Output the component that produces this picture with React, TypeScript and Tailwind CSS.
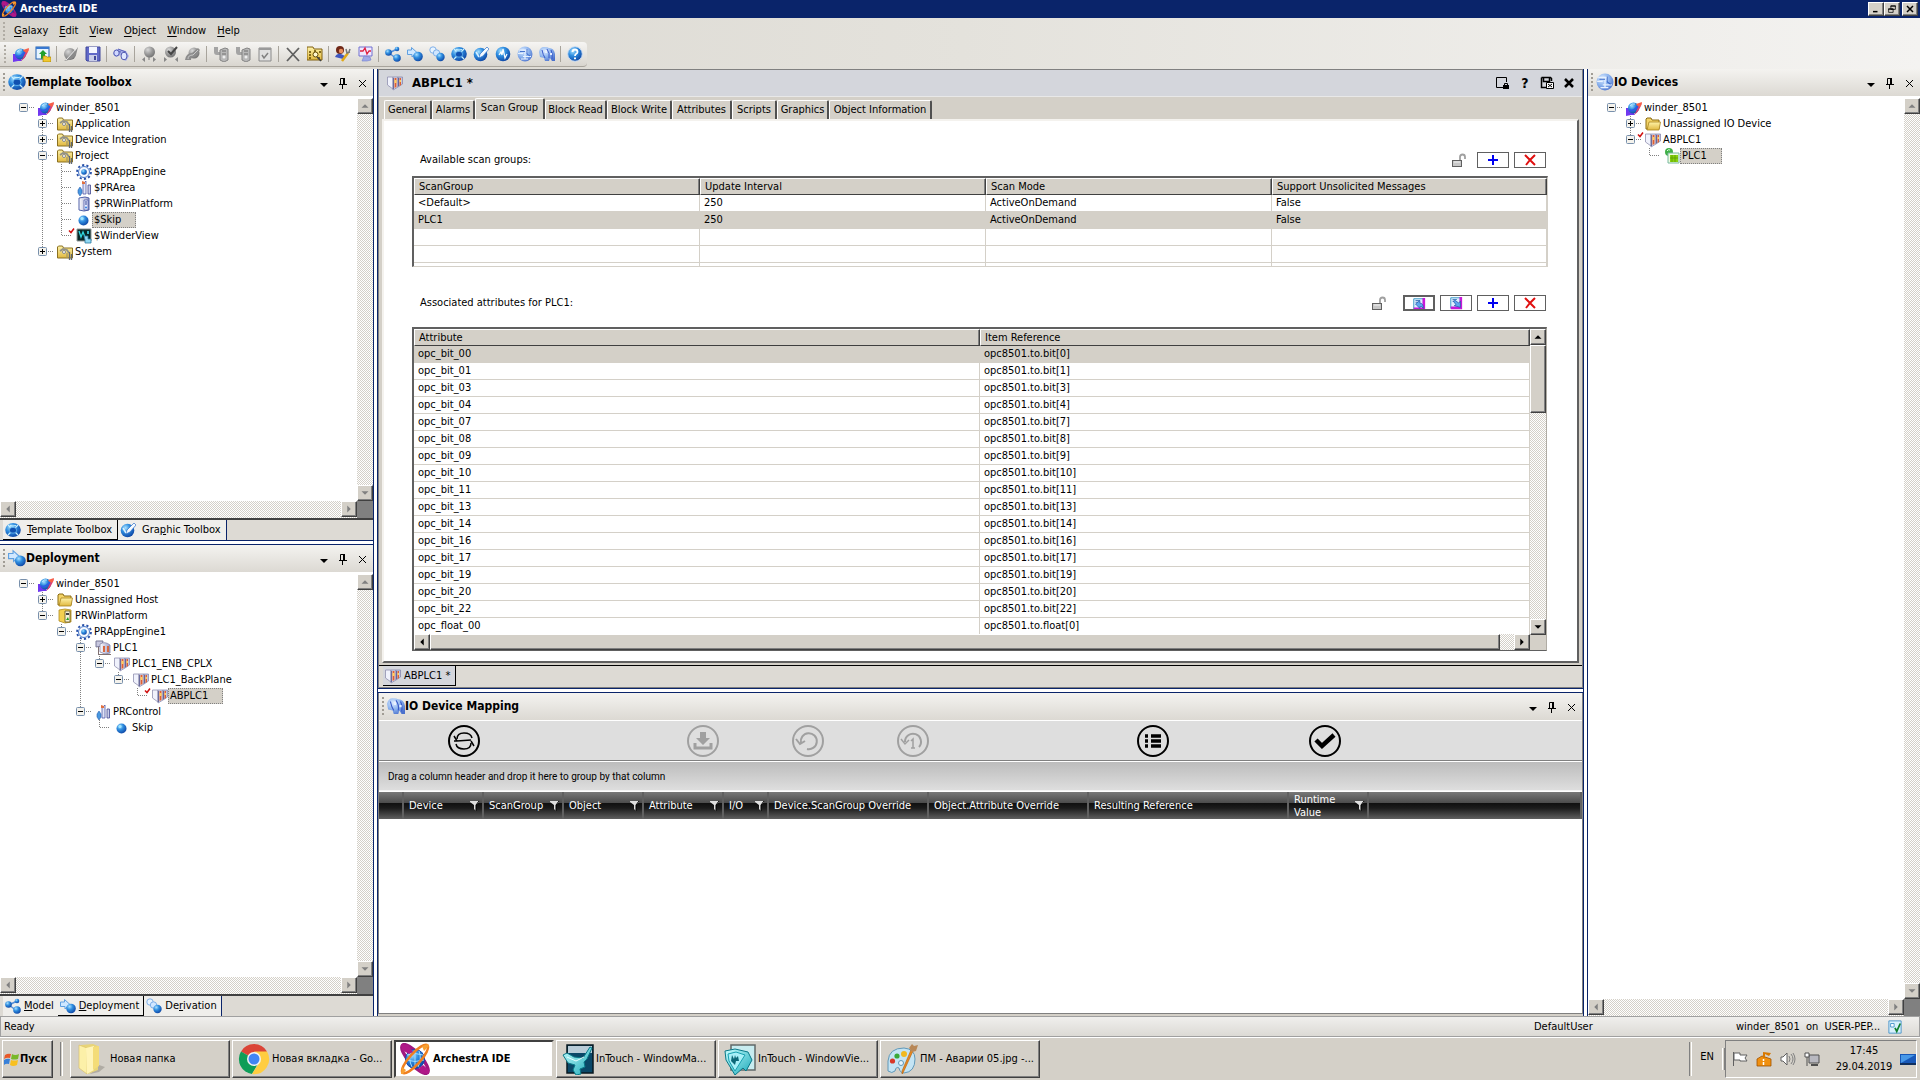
import React, { useState } from "react";
import clsx from "clsx";

const raised =
  "border border-t-white border-l-white border-r-[#404040] border-b-[#404040] bg-[#d4d0c8] shadow-[inset_-1px_-1px_0_#808080]";
const checker =
  "bg-[repeating-conic-gradient(#d4d0c8_0_25%,#ffffff_0_50%)] bg-[length:2px_2px]";

/* ---------- icons ---------- */

type IconProps = { className?: string };

function Svg({ className = "size-4", children, box = "0 0 16 16" }: any) {
  return (
    <svg viewBox={box} className={clsx("shrink-0", className)} aria-hidden="true">
      {children}
    </svg>
  );
}

// Shared gradients, referenced by id from every icon
function Defs() {
  return (
    <svg width="0" height="0" className="absolute" aria-hidden="true">
      <defs>
        <radialGradient id="blue" cx="0.35" cy="0.3" r="0.8">
          <stop offset="0" stopColor="#a8e0ff" />
          <stop offset="0.4" stopColor="#2f8ee0" />
          <stop offset="1" stopColor="#0a3c9c" />
        </radialGradient>
        <radialGradient id="grey" cx="0.35" cy="0.3" r="0.8">
          <stop offset="0" stopColor="#d8d8d8" />
          <stop offset="0.5" stopColor="#9a9a9a" />
          <stop offset="1" stopColor="#6c6c6c" />
        </radialGradient>
        <radialGradient id="pale" cx="0.35" cy="0.3" r="0.8">
          <stop offset="0" stopColor="#dcebff" />
          <stop offset="0.5" stopColor="#8db4ee" />
          <stop offset="1" stopColor="#4a70cc" />
        </radialGradient>
        <linearGradient id="folder" x1="0" y1="0" x2="0" y2="1">
          <stop offset="0" stopColor="#fff3a8" />
          <stop offset="1" stopColor="#e0b840" />
        </linearGradient>
        <linearGradient id="rack" x1="0" y1="0" x2="1" y2="0">
          <stop offset="0" stopColor="#ffffff" />
          <stop offset="1" stopColor="#9a9cc8" />
        </linearGradient>
        <linearGradient id="teal" x1="0" y1="0" x2="1" y2="1">
          <stop offset="0" stopColor="#c8ffff" />
          <stop offset="1" stopColor="#18a8b8" />
        </linearGradient>
      </defs>
    </svg>
  );
}

const Galaxy = (p: IconProps) => (
  <Svg {...p}>
    <path d="M0 8h5l4 7H5l-5 1z" fill="#7038f0" />
    <circle cx="7.500" cy="8" r="5.500" fill="url(#blue)" />
    <path d="M8 15Q13 12 16 3l-5 2 1 2q-2 5-4 8z" fill="#d84078" />
    <path d="M10 4l6-2-1 4-3 1z" fill="#f86048" />
    <path d="M3 10q4 2 9-4" stroke="#3058e8" strokeWidth="1.500" fill="none" />
    <path d="M4 6q2-3 5-2" stroke="#b8e8ff" fill="none" />
  </Svg>
);
const GalaxyGrey = (p: IconProps) => (
  <Svg {...p}>
    <circle cx="7" cy="8" r="6" fill="url(#grey)" />
    <path d="M1 15Q8 11 15 1l-2 8Q9 14 1 15z" fill="#8a8a8a" />
    <path d="M3 14L14 2" stroke="#e8e8e8" />
  </Svg>
);
const ImportWin = (p: IconProps) => (
  <Svg {...p}>
    <rect x="1" y="1" width="13" height="12" fill="#e8f4ff" stroke="#2060b0" />
    <path d="M1 1h13v2H1z" fill="#3878d0" />
    <path d="M6 13V8H4l4-4 4 4h-2v4z" fill="#20a030" />
    <path d="M8 10h3l1 1h4v5H8z" fill="#f0c830" stroke="#a07800" strokeWidth=".6" />
  </Svg>
);
const Save = (p: IconProps) => (
  <Svg {...p}>
    <path d="M1 1h14v14H2l-1-1z" fill="#6068c8" stroke="#40489c" />
    <rect x="4" y="1" width="8" height="6" fill="#f4f6ff" />
    <rect x="4" y="9" width="8" height="6" fill="#c8cce8" />
    <rect x="9" y="10" width="2" height="4" fill="#404898" />
  </Svg>
);
const Binoculars = (p: IconProps) => (
  <Svg {...p}>
    <path d="M2 4l3-1 8 2 3 5-3 5-4-2-1-4-5 2-3-3z" fill="#a8b0e8" />
    <path d="M5 3l8 3M2 5l6 1" stroke="#5860b8" />
    <ellipse cx="3.500" cy="7" rx="2.700" ry="3" fill="#d0d8ff" stroke="#5058b0" />
    <ellipse cx="11" cy="10" rx="3" ry="3.800" fill="#e0e8ff" stroke="#5058b0" />
  </Svg>
);
const GreyCheckOut = (p: IconProps) => (
  <Svg {...p}>
    <circle cx="8.500" cy="6" r="5.500" fill="url(#grey)" />
    <path d="M1 13.500l3-2.500v5zM15 13.500L12 11v5z" fill="#888" />
    <path d="M8 11v3" stroke="#777" />
  </Svg>
);
const GreyCheckIn = (p: IconProps) => (
  <Svg {...p}>
    <circle cx="7.500" cy="6" r="5.500" fill="url(#grey)" />
    <path d="M5 5l3 3 6-7" stroke="#444" strokeWidth="2" fill="none" />
    <path d="M4 13.500L1 11v5zM12 13.500l3-2.500v5z" fill="#888" />
  </Svg>
);
const GreyUndo = (p: IconProps) => (
  <Svg {...p}>
    <circle cx="9" cy="7" r="5.500" fill="url(#grey)" />
    <path d="M0 14q1-7 7-7l6-5 2 2-6 7q-3 0-3 3z" fill="#8c8c8c" />
    <path d="M3 13q0-4 5-4l5-5" stroke="#c8c8c8" fill="none" />
  </Svg>
);
const GreyDeploy = (p: IconProps) => (
  <Svg {...p}>
    <path d="M1 1h4v5h5v3H4Q1 9 1 6z" fill="#a4a4a4" />
    <path d="M7 4l5-2 3 1v11l-4 2-4-2z" fill="#b8b8b8" stroke="#848484" />
    <path d="M9 5h4M9 8h4" stroke="#707070" />
    <circle cx="11" cy="11" r="1.500" fill="#eee" />
  </Svg>
);
const GreyList = (p: IconProps) => (
  <Svg {...p}>
    <path d="M2 2h12v13H2z" fill="#e0e0e0" stroke="#8a8a8a" />
    <path d="M2 2h12v2H2z" fill="#9a9a9a" />
    <path d="M5 9l2 3 4-5" stroke="#808080" strokeWidth="1.500" fill="none" />
  </Svg>
);
const DeleteX = (p: IconProps) => (
  <Svg {...p}>
    <path d="M2 2l12 13M14 2L2 15" stroke="#606060" strokeWidth="1.800" />
  </Svg>
);
const FolderSearch = (p: IconProps) => (
  <Svg {...p}>
    <path d="M0 1h6l1 2h8v11H0z" fill="url(#folder)" stroke="#806010" />
    <path d="M2 6h2M2 9h2M2 12h2M7 5h2M12 6h2M11 12h2" stroke="#604800" strokeWidth="1.500" />
    <circle cx="8.500" cy="8.500" r="2.500" fill="#fff8d0" stroke="#604800" />
    <path d="M10 11l4 4" stroke="#404040" strokeWidth="1.500" />
  </Svg>
);
const UserWrench = (p: IconProps) => (
  <Svg {...p}>
    <circle cx="5" cy="4" r="4" fill="#702818" />
    <circle cx="6" cy="5" r="2.200" fill="#e89060" />
    <path d="M0 11q2-4 6-3l4 2-2 3z" fill="#4058c0" />
    <path d="M7 15l6-8" stroke="#e0a818" strokeWidth="2.500" />
    <path d="M11 3l1 4 3-1M15 3l-1 3" stroke="#787878" strokeWidth="1.500" fill="none" />
  </Svg>
);
const ChartDoc = (p: IconProps) => (
  <Svg {...p}>
    <path d="M2 1h13v9H2z" fill="#f0e8ff" stroke="#7070d0" />
    <path d="M3 5h3l2-3 2 6 2-3h2" stroke="#e02040" strokeWidth="1.300" fill="none" />
    <path d="M5 15l2-5 6 1 1 3-4 1z" fill="#a0a8e8" stroke="#7080d0" strokeWidth=".6" />
  </Svg>
);
const Model = (p: IconProps) => (
  <Svg {...p}>
    <path d="M12 3L4 7l8 6" stroke="#5890d8" strokeWidth="1.500" fill="none" />
    <circle cx="12" cy="3" r="2.300" fill="url(#blue)" />
    <circle cx="3.500" cy="6.500" r="3.300" fill="url(#blue)" />
    <circle cx="12" cy="12" r="3.800" fill="url(#blue)" />
  </Svg>
);
const DeployIcon = (p: IconProps) => (
  <Svg {...p}>
    <path d="M.5 4h4V1.500L10 6.500 5 11V8.500H.5z" fill="#d0e8ff" stroke="#60a0e0" />
    <circle cx="11" cy="10.500" r="4.800" fill="url(#blue)" />
  </Svg>
);
const Derivation = (p: IconProps) => (
  <Svg {...p}>
    <circle cx="4" cy="4" r="3.200" fill="#e8f4ff" stroke="#80b0e8" />
    <circle cx="7.500" cy="7" r="3.200" fill="#d0e6ff" stroke="#80b0e8" />
    <circle cx="11.500" cy="11" r="4.200" fill="url(#blue)" />
  </Svg>
);
const ToolboxIcon = (p: IconProps) => (
  <Svg {...p}>
    <ellipse cx="8" cy="8" rx="7.800" ry="7" fill="url(#blue)" />
    <path d="M3 3l3 3M13 3l-3 3M3 13l3-3M13 13l-3-3" stroke="#c8f0ff" strokeWidth="1.200" />
    <path d="M5 3.500q3 1 6 0" stroke="#c8f0ff" fill="none" />
    <rect x="4.500" y="5.500" width="7" height="5.500" rx="2.500" fill="#1050b0" stroke="#68b8f0" strokeWidth=".8" />
  </Svg>
);
const GraphicIcon = (p: IconProps) => (
  <Svg {...p}>
    <circle cx="7.500" cy="8.500" r="6.800" fill="url(#blue)" />
    <path d="M6 12l1-4 7-7 2 2-6 7z" fill="#f4faff" stroke="#3070c8" strokeWidth=".7" />
    <path d="M3 6l3 5" stroke="#d8f0ff" strokeWidth="1.500" />
  </Svg>
);
const Operations = (p: IconProps) => (
  <Svg {...p}>
    <circle cx="8" cy="8" r="7.300" fill="url(#blue)" />
    <path d="M4 9l2-3 1 3 1-6 2 9 2-4" stroke="#fff" strokeWidth="1.200" fill="none" />
  </Svg>
);
const IoDevices = (p: IconProps) => (
  <Svg {...p}>
    <circle cx="8" cy="8" r="7.500" fill="url(#pale)" />
    <path d="M2 4h8v3M1 7.500h5M6 10.500h8M4 13h7M8 4v9" stroke="#e8f2ff" strokeWidth="1.200" fill="none" />
    <path d="M3 5.500h5M10 3v5l3 2" stroke="#3868c8" strokeWidth=".9" fill="none" />
  </Svg>
);
const IoMapping = (p: IconProps) => (
  <Svg {...p}>
    <path d="M0 6q1-5 5-5t5 1q5 0 6 6v7h-3l-2-3-1 3H6l-1-3-4-1z" fill="url(#pale)" />
    <path d="M3 4q1 5 3 8M8 3q3 4 2 9M12 4q2 4 1 9" stroke="#3858c8" fill="none" />
    <path d="M6 4h2v3H6zM11 7h2v2h-2z" fill="#e8f0ff" />
  </Svg>
);
const HelpIcon = (p: IconProps) => (
  <Svg {...p}>
    <circle cx="8" cy="8" r="7.300" fill="url(#blue)" stroke="#c8dcf4" />
    <path d="M5.500 6q0-2.500 2.500-2.500T10.500 6q0 1.200-1.500 2-1 .6-1 2" stroke="#fff" strokeWidth="1.800" fill="none" />
    <path d="M7 11.500h2v1.700H7z" fill="#fff" />
  </Svg>
);
const ToolFolder = (p: IconProps) => (
  <Svg {...p}>
    <path d="M.5 14V3l1-1h4l1 2h9v10z" fill="url(#folder)" stroke="#8a7020" />
    <path d="M3 7l3-2 4 1 2 3" stroke="#909088" strokeWidth="1.800" fill="none" />
    <circle cx="7" cy="8" r="1.500" fill="#fff" stroke="#888" />
    <path d="M10 9v5" stroke="#a89860" strokeWidth="1.300" />
    <path d="M12.500 8v8M14.500 10v6" stroke="#606870" strokeWidth="1.300" />
  </Svg>
);
const Folder = (p: IconProps) => (
  <Svg {...p}>
    <path d="M1 13V3l1-1h4l1 2h7v9z" fill="#f4d468" stroke="#8a6a10" />
    <path d="M2 14l2-8h11.500L14 14z" fill="url(#folder)" stroke="#a88420" strokeWidth=".8" />
  </Svg>
);
const Gear = (p: IconProps) => (
  <Svg {...p}>
    <circle cx="8" cy="8" r="7" fill="none" stroke="#2850a8" strokeWidth="1.800" strokeDasharray="2.200 2.200" />
    <circle cx="8" cy="8" r="5.500" fill="#f4f8ff" stroke="#4878c8" />
    <circle cx="8" cy="8" r="2.800" fill="url(#blue)" />
  </Svg>
);
const AreaIcon = (p: IconProps) => (
  <Svg {...p}>
    <path d="M7 4l3-3v13H7z" fill="#e0e4f4" stroke="#5058a8" strokeWidth=".8" />
    <path d="M12 5h2.500v9H12z" fill="#c8cce8" stroke="#404890" strokeWidth=".8" />
    <path d="M6 1l3 1v2H6z" fill="#e07040" />
    <path d="M4 7l2 3v3l-2 3-2-3v-3z" fill="#4898e0" stroke="#2860b0" strokeWidth=".6" />
  </Svg>
);
const Platform = (p: IconProps) => (
  <Svg {...p}>
    <path d="M3 2l6-1 4 1v12l-5 1-5-1z" fill="url(#rack)" stroke="#5060a8" />
    <path d="M8 4h4v10H8z" fill="#e8ecff" stroke="#4050a0" strokeWidth=".7" />
    <path d="M9 6h2M9 8h2" stroke="#304090" />
    <circle cx="10" cy="11.500" r="1" fill="#3080e0" />
  </Svg>
);
const PlatformYellow = (p: IconProps) => (
  <Svg {...p}>
    <path d="M2 2l6-1 6 1v12l-6 1-6-2z" fill="#f4d050" stroke="#b08c20" strokeWidth=".8" />
    <path d="M8 3h5v11H8z" fill="#f8f4d8" stroke="#605020" strokeWidth=".8" />
    <path d="M9 5h3v2H9z" fill="#404040" />
    <path d="M9 12l2-3 1 3z" fill="#20a020" />
  </Svg>
);
const Ball = (p: IconProps) => (
  <Svg {...p}>
    <circle cx="7.500" cy="8.500" r="5" fill="url(#blue)" />
    <circle cx="6" cy="6.500" r="1.500" fill="#a0e8ff" />
  </Svg>
);
const ViewIcon = (p: IconProps) => (
  <Svg {...p}>
    <path d="M1 1h14v12H1z" fill="#082828" stroke="#909898" />
    <path d="M3 3l2 6 2-5 2 5" stroke="#30d8e0" fill="none" strokeWidth="1.300" />
    <path d="M8 8h4v3h3v4H9v-3z" fill="#90d8f4" stroke="#2878a0" strokeWidth=".8" />
    <path d="M11 3h2v3h-2z" fill="#38b8c8" />
  </Svg>
);
const Rack = (p: IconProps) => (
  <Svg {...p}>
    <path d="M.5 2H6v12L.5 10z" fill="#f0f2fc" stroke="#9090b0" strokeWidth=".8" />
    <path d="M6 2h5v10l-5 3z" fill="#dcdef0" stroke="#8080a8" strokeWidth=".7" />
    <path d="M11 2h4.500v7L11 12z" fill="#c4c6e0" stroke="#8080a8" strokeWidth=".7" />
    <path d="M7.500 3h2v9l-2 1zM12.500 3h1.500v7l-1.500 1z" fill="#e06030" />
    <path d="M7.500 5h2v3h-2zM12.500 5h1.500v2h-1.500z" fill="#ffd060" />
    <path d="M6.500 3v11M11.500 3v8" stroke="#484880" strokeWidth=".7" />
  </Svg>
);
const RackNet = (p: IconProps) => (
  <Svg {...p}>
    <path d="M1 1h7l-1 5-6 1z" fill="#c8c8e0" stroke="#787898" />
    <path d="M5 4q5-3 10 1v8l-5 1-5-2z" fill="url(#rack)" stroke="#8484a8" strokeWidth=".8" />
    <path d="M8 6h2v6H8zM12 6h2v6h-2z" fill="#d86840" />
    <path d="M3 14.500h13M3.500 7v7" stroke="#807070" />
  </Svg>
);
const PlcGreen = (p: IconProps) => (
  <Svg {...p}>
    <circle cx="5" cy="4" r="4" fill="#40b048" />
    <path d="M3 3q1-2 3-1" stroke="#d8ffd8" fill="none" />
    <path d="M4 5h11v10H4z" fill="#f0fce0" stroke="#78b8a0" />
    <path d="M6 7h8v7H6z" fill="#88d010" />
    <path d="M8 7v7M11 7v7M6 10h8" stroke="#58a000" strokeWidth=".8" />
  </Svg>
);
const Unlock = (p: IconProps) => (
  <Svg {...p}>
    <path d="M9 8V5q0-2.500 2.500-2.500T14 5v2" stroke="#a0a0a0" strokeWidth="1.800" fill="none" />
    <rect x="1.500" y="8.500" width="9" height="6" fill="#c8c8c8" stroke="#606060" />
    <path d="M3 10h6" stroke="#f4f4f4" />
  </Svg>
);
const AttrAdd = ({ flip, className = "size-[14px]" }: any) => (
  <Svg className={className}>
    <path d="M2 2h11v12H2z" fill="#e0f0ff" stroke="#2890c0" />
    <path d="M12 1h3v14H2v-3h10z" fill="#c818d8" />
    <path d="M4 4h5M4 6h4" stroke="#3870b8" />
    <path
      d={flip ? "M13 13L6 11l2-1-3-4 2-1 4 3 2-2z" : "M4 8l5-4v3q4 0 4 6-2-3-4-2v2z"}
      fill="#60a8f0"
      stroke="#2050a8"
      strokeWidth=".8"
    />
  </Svg>
);

const XLogo = ({ className = "size-8" }: IconProps) => (
  <Svg className={className} box="0 0 32 32">
    <ellipse cx="16" cy="16" rx="18.500" ry="6" fill="none" stroke="#a01880" strokeWidth="3.500" transform="rotate(48 16 16)" />
    <circle cx="16" cy="16" r="9.500" fill="url(#blue)" stroke="#1848b0" />
    <path d="M8 12q8-3 16 0M7 17q9 3 18 0M12 8q-3 8 1 16M20 8q3 8-1 16M16 7v18" stroke="#a0dcff" fill="none" />
    <ellipse cx="16" cy="16" rx="18.500" ry="5.500" fill="none" stroke="#f08020" strokeWidth="2.500" transform="rotate(-48 16 16)" />
    <path d="M2 1l7 1 5 7-4 2L3 7zM30 31l-8-1-2-5 4-3 6 5z" fill="#b01888" />
    <path d="M23 3l6-2 1 2-5 5zM3 24l4 3-3 4H2z" fill="#f8a030" />
  </Svg>
);
const BigFolder = () => (
  <Svg className="size-8" box="0 0 32 32">
    <path d="M14 31l9-2 6-5-6-2z" fill="#b0aca4" />
    <path d="M5 2l12-1 5 2v24l-10 4z" fill="#e8d478" />
    <path d="M3 2l8 3v26l-8-6z" fill="#fcf0a8" stroke="#d8bc60" strokeWidth=".6" />
    <path d="M10 5l8-2v24l-7 4z" fill="#fff4b8" />
    <path d="M17 4l6-1v20l-6 4z" fill="#f4dc78" />
  </Svg>
);
const Chrome = () => (
  <Svg className="size-8" box="0 0 32 32">
    <path d="M16 16L3 8.500A15 15 0 0 1 29 8.500z" fill="#db4437" />
    <path d="M16 16L3 8.500A15 15 0 0 0 14 31l7-12z" fill="#0f9d58" />
    <path d="M14 31A15 15 0 0 0 29 8.500H16l6 10z" fill="#ffcd40" />
    <circle cx="16" cy="16" r="7" fill="#f4f4f4" />
    <circle cx="16" cy="16" r="5.500" fill="#4285f4" />
  </Svg>
);
const WindowMaker = () => (
  <Svg className="size-8" box="0 0 32 32">
    <path d="M5 2h26v28H5z" fill="#0a4868" stroke="#081820" strokeWidth="1.500" />
    <path d="M6 3h24v7H6z" fill="#b8ccd8" />
    <path d="M1 12l4-2 7 4 9 1 7-11 2 1-5 11 -3 3 1 5-5 2 1 5-5 1-3-5 2-5-7-2z" fill="url(#teal)" stroke="#087888" />
    <path d="M5 14l9 4 8-4" stroke="#e8ffff" fill="none" />
  </Svg>
);
const WindowViewer = () => (
  <Svg className="size-8" box="0 0 32 32">
    <path d="M7 2h24v25H7z" fill="#c8ecf0" stroke="#606868" strokeWidth="1.500" />
    <path d="M1 8l10-2 13 3 4 8-6 11-3-3-8 7L2 17z" fill="url(#teal)" stroke="#087888" />
    <path d="M4 11l8-2 9 3-10 16-6-10z" fill="#a8f0f8" stroke="#18a0b0" />
    <path d="M8 12l-1 6 4 4 1-4 3 0-1-5-2 2-1-3-1 4z" fill="#0c6878" />
  </Svg>
);
const Palette = () => (
  <Svg className="size-8" box="0 0 32 32">
    <path d="M2 18Q3 5 18 5q11 1 11 11 0 13-11 14-4 0-5-5-3-2-4 3-3 3-7 0z" fill="#c4e4f4" stroke="#6098b8" />
    <circle cx="6.500" cy="18" r="2.600" fill="#d83828" />
    <circle cx="11" cy="13" r="2.600" fill="#38a838" />
    <circle cx="18" cy="11" r="3" fill="#f0b820" />
    <circle cx="15" cy="20" r="2.500" fill="#e8f4fc" stroke="#6098b8" />
    <path d="M27 8L17 30l-1 1v-3L25 7z" fill="#e88820" stroke="#b06010" strokeWidth=".6" />
    <path d="M23 5l3-4 2 2 4-1-2 6-4 1z" fill="#b88858" />
  </Svg>
);

/* ---------- tree ---------- */

type Row = {
  label: string;
  icon: (p: IconProps) => React.ReactElement;
  // one entry per indent level, true where an ancestor line runs through
  guides: boolean[];
  box?: "+" | "-";
  up?: boolean;
  down?: boolean;
  checked?: boolean;
  selected?: boolean;
};

function Tree({ label, rows }: { label: string; rows: Row[] }) {
  const [sel, setSel] = useState(rows.findIndex((r) => r.selected));
  return (
    <ul role="tree" aria-label={label} className="pl-[14px] pt-1">
      {rows.map((r, i) => (
        <li
          key={r.label}
          role="treeitem"
          aria-selected={sel === i}
          onClick={() => setSel(i)}
          className="flex h-4 items-center"
        >
          {r.guides.map((g, k) => (
            <svg key={k} className="h-4 w-[19px] shrink-0" aria-hidden="true">
              {g && <path d="M9.500 0v16" stroke="#808080" strokeDasharray="1 1" />}
            </svg>
          ))}
          <svg className="h-4 w-6 shrink-0" aria-hidden="true">
            <g stroke="#808080" strokeDasharray="1 1">
              {r.up && <path d="M9.500 0v8" />}
              {r.down && <path d="M9.500 8v8" />}
              <path d={r.box ? "M15 7.500h5" : "M10 7.500h10"} />
            </g>
            {r.box && (
              <>
                <rect x="5.500" y="3.500" width="8" height="8" rx="1" fill="#f4f2ec" stroke="#7890ac" />
                <path d={r.box === "+" ? "M7 7.500h5M9.500 5v5" : "M7 7.500h5"} stroke="#000" />
              </>
            )}
            {r.checked && <path d="M17 2.500l2 2 3-4" stroke="#d01010" strokeWidth="1.500" fill="none" />}
          </svg>
          <r.icon className="size-4" />
          <span
            className={clsx(
              "h-4 whitespace-nowrap border pl-px leading-[14px]",
              sel === i
                ? "border-dotted border-[#808080] bg-[#d4d0c8] pr-[14px]"
                : "border-transparent"
            )}
          >
            {r.label}
          </span>
        </li>
      ))}
    </ul>
  );
}

const templateRows: Row[] = [
  { label: "winder_8501", icon: Galaxy, guides: [], box: "-" },
  { label: "Application", icon: ToolFolder, guides: [false], box: "+", up: true, down: true },
  { label: "Device Integration", icon: ToolFolder, guides: [false], box: "+", up: true, down: true },
  { label: "Project", icon: ToolFolder, guides: [false], box: "-", up: true, down: true },
  { label: "$PRAppEngine", icon: Gear, guides: [false, true], up: true, down: true },
  { label: "$PRArea", icon: AreaIcon, guides: [false, true], up: true, down: true },
  { label: "$PRWinPlatform", icon: Platform, guides: [false, true], up: true, down: true },
  { label: "$Skip", icon: Ball, guides: [false, true], up: true, down: true, selected: true },
  { label: "$WinderView", icon: ViewIcon, guides: [false, true], up: true, checked: true },
  { label: "System", icon: ToolFolder, guides: [false], box: "+", up: true },
];

const deployRows: Row[] = [
  { label: "winder_8501", icon: Galaxy, guides: [], box: "-" },
  { label: "Unassigned Host", icon: Folder, guides: [false], box: "+", up: true, down: true },
  { label: "PRWinPlatform", icon: PlatformYellow, guides: [false], box: "-", up: true },
  { label: "PRAppEngine1", icon: Gear, guides: [false, false], box: "-", up: true },
  { label: "PLC1", icon: RackNet, guides: [false, false, false], box: "-", up: true, down: true },
  { label: "PLC1_ENB_CPLX", icon: Rack, guides: [false, false, false, true], box: "-", up: true },
  { label: "PLC1_BackPlane", icon: Rack, guides: [false, false, false, true, false], box: "-", up: true },
  { label: "ABPLC1", icon: Rack, guides: [false, false, false, true, false, false], up: true, checked: true, selected: true },
  { label: "PRControl", icon: AreaIcon, guides: [false, false, false], box: "-", up: true },
  { label: "Skip", icon: Ball, guides: [false, false, false, false], up: true },
];

const deviceRows: Row[] = [
  { label: "winder_8501", icon: Galaxy, guides: [], box: "-" },
  { label: "Unassigned IO Device", icon: Folder, guides: [false], box: "+", up: true, down: true },
  { label: "ABPLC1", icon: Rack, guides: [false], box: "-", up: true, checked: true },
  { label: "PLC1", icon: PlcGreen, guides: [false, false], up: true, selected: true },
];

/* ---------- shared chrome ---------- */

const arrows: Record<string, string> = {
  up: "M4 10h8L8 6z",
  down: "M4 6h8L8 10z",
  left: "M10 4v8L6 8z",
  right: "M6 4v8l4-4z",
};

function ArrowButton({ dir, dark }: { dir: string; dark?: boolean }) {
  return (
    <button
      type="button"
      aria-label={`Scroll ${dir}`}
      className={clsx(raised, "grid size-4 shrink-0 place-items-center")}
    >
      <svg viewBox="0 0 16 16" className="size-[14px]" aria-hidden="true">
        <path d={arrows[dir]} fill={dark ? "#000" : "#808080"} />
      </svg>
    </button>
  );
}

function ScrollArea({ children }: { children: React.ReactNode }) {
  return (
    <div className="flex min-h-0 flex-1 flex-col bg-white">
      <div className="flex min-h-0 flex-1">
        <div className="min-w-0 flex-1 overflow-hidden">{children}</div>
        <div className={clsx(checker, "mt-[2px] flex w-4 flex-col justify-between")}>
          <ArrowButton dir="up" />
          <ArrowButton dir="down" />
        </div>
      </div>
      <div className="flex h-[17px] bg-[#808080]">
        <div className={clsx(checker, "flex flex-1 justify-between")}>
          <ArrowButton dir="left" />
          <ArrowButton dir="right" />
        </div>
        <div className="w-4" />
      </div>
    </div>
  );
}

function PanelHeader({ title, icon: Icon }: any) {
  return (
    <header className="flex h-[27px] shrink-0 items-center bg-gradient-to-b from-[#f4f3f0] to-[#dcd9d3] pb-[2px] pl-[3px] pr-[3px]">
      <span className="h-[18px] w-[3px] border-l-2 border-dotted border-[#a09c94]" />
      <Icon className="ml-[2px] size-[18px]" />
      <h2 className="flex-1 text-[12px] font-bold">{title}</h2>
      <div className="flex gap-[3px] pt-[3px]">
        <button type="button" aria-label="Window position" className="grid size-4 place-items-center">
          <svg viewBox="0 0 16 16" className="size-4" aria-hidden="true">
            <path d="M4 8h8l-4 4z" />
          </svg>
        </button>
        <button type="button" aria-label="Auto hide" className="grid size-4 place-items-center">
          <svg viewBox="0 0 16 16" className="size-4" fill="none" stroke="#000" aria-hidden="true">
            <path d="M5.500 9V3.500h4V9M9.500 3v6M4 9.500h8M8.500 3v6M7.500 10v4" />
          </svg>
        </button>
        <button type="button" aria-label="Close" className="grid size-4 place-items-center">
          <svg viewBox="0 0 16 16" className="size-4" stroke="#000" aria-hidden="true">
            <path d="M5 5l7 7M12 5l-7 7" />
          </svg>
        </button>
      </div>
    </header>
  );
}

type DockTab = { label: React.ReactNode; icon: any; active?: boolean };

function DockTabs({ tabs, wide }: { tabs: DockTab[]; wide?: boolean }) {
  return (
    <div className="flex h-[22px] shrink-0 border-t-2 border-[#404040] bg-[#dddad4] pl-[3px]">
      {tabs.map((t, i) => (
        <button
          key={i}
          type="button"
          className={clsx(
            "flex items-center whitespace-nowrap bg-[#efeeeb] pl-[2px]",
            wide ? "gap-[6px] pr-[5px]" : "gap-[3px] pr-1",
            t.active && "border-b border-r border-black bg-[#e6e4e0]",
            i === tabs.length - 1 && "border-r border-[#0a246a]"
          )}
        >
          <t.icon className="size-4" />
          <span>{t.label}</span>
        </button>
      ))}
    </div>
  );
}

/* ---------- toolbar ---------- */

const toolbar: [string, any][][] = [
  [["Change galaxy", Galaxy], ["Import", ImportWin]],
  [["Open", GalaxyGrey], ["Save", Save]],
  [["Find", Binoculars]],
  [["Check out", GreyCheckOut], ["Check in", GreyCheckIn], ["Undo check out", GreyUndo]],
  [["Deploy", GreyDeploy], ["Undeploy", GreyDeploy], ["Validate", GreyList]],
  [["Delete", DeleteX], ["Properties", FolderSearch]],
  [["User settings", UserWrench], ["Galaxy status", ChartDoc]],
  [
    ["Model view", Model],
    ["Deployment view", DeployIcon],
    ["Derivation view", Derivation],
    ["Template toolbox", ToolboxIcon],
    ["Graphic toolbox", GraphicIcon],
    ["Operations", Operations],
    ["IO devices", IoDevices],
    ["IO device mapping", IoMapping],
  ],
  [["Help", HelpIcon]],
];

function Grip() {
  return <span className="ml-[3px] mr-1 h-[18px] border-l-2 border-dotted border-[#b0aca4]" />;
}

function TopBars() {
  return (
    <>
      <div className="flex h-[18px] items-center bg-[#0a246a] pl-px pr-[2px] text-white">
        <XLogo className="size-4" />
        <h1 className="ml-[3px] flex-1 text-[11px] font-bold">ArchestrA IDE</h1>
        <div className="flex text-black">
          {["M4 11.500h6", "M6.500 3.500h6v5h-6zM6 4.500h7M3.500 7.500h6v5h-6zM3 8.500h7", "M4 4l8 8M12 4l-8 8"].map((d, i) => (
            <button
              key={d}
              type="button"
              aria-label={["Minimize", "Restore", "Close"][i]}
              className={clsx(raised, "grid h-[14px] w-4 place-items-center", i === 2 && "ml-[2px]")}
            >
              <svg viewBox="0 0 16 16" className="h-3 w-[14px]" fill="none" stroke="#000" strokeWidth={i === 1 ? 1 : 2} aria-hidden="true">
                <path d={d} />
              </svg>
            </button>
          ))}
        </div>
      </div>
      <div className="bg-gradient-to-r from-[#d8d5ce] via-[#e4e2dc] to-[#f4f3f1] pb-[2px]">
        <nav className="flex h-6 items-center pt-[2px]">
          <Grip />
          {["Galaxy", "Edit", "View", "Object", "Window", "Help"].map((m) => (
            <button key={m} type="button" className="pl-[5px] pr-[6px]">
              <span className="underline underline-offset-2">{m[0]}</span>
              {m.slice(1)}
            </button>
          ))}
        </nav>
        <div className="flex h-[25px] w-fit items-center rounded-r-sm border-b border-[#a8a49c] bg-gradient-to-b from-[#f6f5f3] to-[#d9d6cf] pl-px pr-px">
          <Grip />
          {toolbar.map((group, g) => (
            <div key={g} className="flex items-center">
              {g > 0 && <span className="ml-[2px] mr-[3px] h-4 w-px bg-[#a8a49c]" />}
              {group.map(([name, Icon]) => (
                <button key={name} type="button" aria-label={name} title={name} className="grid w-[22px] place-items-center">
                  <Icon className="size-4" />
                </button>
              ))}
            </div>
          ))}
        </div>
      </div>
    </>
  );
}

/* ---------- scan group editor ---------- */

const editorTabs: [string, string][] = [
  ["General", "w-[48px]"],
  ["Alarms", "w-[43px]"],
  ["Scan Group", "w-[70px]"],
  ["Block Read", "w-[62px]"],
  ["Block Write", "w-[65px]"],
  ["Attributes", "w-[60px]"],
  ["Scripts", "w-[45px]"],
  ["Graphics", "w-[52px]"],
  ["Object Information", "w-[103px]"],
];

const scanGroups = [
  ["<Default>", "250", "ActiveOnDemand", "False"],
  ["PLC1", "250", "ActiveOnDemand", "False"],
  ["", "", "", ""],
  ["", "", "", ""],
];

const bits = ["00", "01", "03", "04", "07", "08", "09", "10", "11", "13", "14", "16", "17", "19", "20", "22"];
const attributes = [
  ...bits.map((b) => [`opc_bit_${b}`, `opc8501.to.bit[${Number(b)}]`]),
  ["opc_float_00", "opc8501.to.float[0]"],
];

function BoxButton({ label, strong, children }: any) {
  return (
    <button
      type="button"
      aria-label={label}
      className={clsx("grid h-4 w-8 place-items-center overflow-hidden border-[#606060] bg-white", strong ? "border-2" : "border")}
    >
      {children}
    </button>
  );
}

const PlusMark = () => (
  <svg viewBox="0 0 14 14" className="size-[14px]" stroke="#0000f0" strokeWidth="2" aria-hidden="true">
    <path d="M7 2v10M2 7h10" />
  </svg>
);
const CrossMark = () => (
  <svg viewBox="0 0 14 14" className="size-[14px]" stroke="#e01010" strokeWidth="2" fill="none" aria-hidden="true">
    <path d="M2 2l5 5 5 5M12 2L7 7l-4 5" />
  </svg>
);

const th =
  "h-[17px] border border-t-white border-l-white border-r-[#404040] border-b-[#404040] bg-[#d4d0c8] p-0 pl-1 text-left font-normal leading-[14px] shadow-[inset_-1px_0_0_#808080]";

function Editor() {
  return (
    <section className="flex shrink-0 flex-col border-x border-t border-[#808080] bg-[#d4d0c8]">
      <header className="flex h-[27px] items-center border-b border-[#e8e8e8] bg-[#d4d6dc] pl-2 pr-[5px]">
        <Rack className="size-4" />
        <h2 className="ml-[9px] flex-1 text-[13px] font-bold">ABPLC1 *</h2>
        <div className="flex items-center gap-[6px]">
          <button type="button" aria-label="Lock">
            <svg viewBox="0 0 16 16" className="size-4" aria-hidden="true">
              <path d="M8 12.500H1.500v-10h10V7" fill="none" stroke="#000" />
              <path d="M8 10h6v4H8z" />
              <path d="M9.500 10V8.500h3V10" fill="none" stroke="#000" />
            </svg>
          </button>
          <button type="button" aria-label="Help" className="w-4 text-[14px] font-bold leading-4">
            ?
          </button>
          <button type="button" aria-label="Save and close">
            <svg viewBox="0 0 16 16" className="size-4" aria-hidden="true">
              <path d="M2.500 2.500h9l1 1V6M8 12.500H2.500v-10M4.500 2.500v4h6v-4" fill="none" stroke="#000" strokeWidth="1.500" />
              <path d="M7.500 7.500h7v6h-7z" fill="#fff" stroke="#000" />
              <path d="M9 9l4 3M13 9l-4 3" stroke="#000" />
            </svg>
          </button>
          <button type="button" aria-label="Close">
            <svg viewBox="0 0 16 16" className="size-4" stroke="#000" strokeWidth="2.500" aria-hidden="true">
              <path d="M4 4l8 8M12 4l-8 8" />
            </svg>
          </button>
        </div>
      </header>

      <div role="tablist" className="flex h-[22px] items-end pl-[5px] pr-1">
        {editorTabs.map(([name, w], i) => (
          <button
            key={name}
            type="button"
            role="tab"
            aria-selected={i === 2}
            className={clsx(
              w,
              "whitespace-nowrap rounded-t-[2px] border-l border-t border-r-2 border-l-white border-t-white border-r-[#505050] text-center",
              i === 2 ? "h-[21px] pb-[3px]" : "h-[19px]"
            )}
          >
            {name}
          </button>
        ))}
      </div>

      <div className="mx-[3px] border-2 border-l-[#f4f2ee] border-t-[#f4f2ee] border-r-[#606060] border-b-[#606060] bg-white pb-[10px] pl-7 pr-[29px] pt-[31px]">
        <div className="flex items-center">
          <p className="flex-1 pl-2">Available scan groups:</p>
          <Unlock className="size-4" />
          <div className="ml-[10px] mr-[2px] flex gap-[5px]">
            <BoxButton label="Add scan group"><PlusMark /></BoxButton>
            <BoxButton label="Delete scan group"><CrossMark /></BoxButton>
          </div>
        </div>

        <div className="mt-2 h-[91px] overflow-hidden border-b border-l-2 border-r border-t-2 border-[#d4d0c8] border-l-[#606060] border-t-[#606060]">
          <table className="w-full table-fixed border-separate border-spacing-0">
            <colgroup>
              <col className="w-[286px]" />
              <col className="w-[286px]" />
              <col className="w-[286px]" />
              <col />
            </colgroup>
            <thead>
              <tr>
                {["ScanGroup", "Update Interval", "Scan Mode", "Support Unsolicited Messages"].map((h) => (
                  <th key={h} className={th}>{h}</th>
                ))}
              </tr>
            </thead>
            <tbody>
              {scanGroups.map((r, i) => (
                <tr key={i} className={i === 1 ? "bg-[#d4d0c8]" : ""}>
                  {r.map((c, k) => (
                    <td key={k} className="h-[17px] border-b border-r border-[#d4d0c8] p-0 pl-1 leading-4">{c}</td>
                  ))}
                </tr>
              ))}
              <tr>
                {[0, 1, 2, 3].map((k) => (
                  <td key={k} className="h-[17px] border-r border-[#d4d0c8]" />
                ))}
              </tr>
            </tbody>
          </table>
        </div>

        <div className="mt-7 flex items-center">
          <p className="flex-1 pl-2">Associated attributes for PLC1:</p>
          <Unlock className="size-4" />
          <div className="ml-4 mr-[2px] flex gap-[5px]">
            <BoxButton label="Move attributes" strong><AttrAdd /></BoxButton>
            <BoxButton label="Copy attributes"><AttrAdd flip /></BoxButton>
            <BoxButton label="Add attribute"><PlusMark /></BoxButton>
            <BoxButton label="Delete attribute"><CrossMark /></BoxButton>
          </div>
        </div>

        <div className="mr-px mt-4 border-b border-l-2 border-r border-t-2 border-[#606060] border-r-[#b0aca4]">
          <div className="flex">
            <table className="flex-1 table-fixed border-separate border-spacing-0">
              <colgroup>
                <col className="w-[566px]" />
                <col />
              </colgroup>
              <thead>
                <tr>
                  <th className={th}>Attribute</th>
                  <th className={th}>Item Reference</th>
                </tr>
              </thead>
              <tbody>
                {attributes.map(([a, ref], i) => (
                  <tr key={a} className={i === 0 ? "bg-[#d4d0c8]" : ""}>
                    <td className="h-[17px] border-b border-r border-[#d4d0c8] p-0 pl-1 leading-4">{a}</td>
                    <td className="h-[17px] border-b border-r border-[#d4d0c8] p-0 pl-1 leading-4">{ref}</td>
                  </tr>
                ))}
              </tbody>
            </table>
            <div className={clsx(checker, "flex w-4 flex-col")}>
              <ArrowButton dir="up" dark />
              <div className={clsx(raised, "h-[68px]")} />
              <div className="flex-1" />
              <ArrowButton dir="down" dark />
            </div>
          </div>
          <div className="-mt-px flex bg-[#d4d0c8] pr-4">
            <div className={clsx(checker, "flex flex-1")}>
              <ArrowButton dir="left" dark />
              <div className={clsx(raised, "mr-[14px] flex-1")} />
              <ArrowButton dir="right" dark />
            </div>
          </div>
        </div>
      </div>

      <div className="mt-[2px] flex h-[23px] border-b border-t border-b-[#808080] border-t-black bg-[#dddad4] pl-1">
        <button type="button" className="flex h-5 items-center gap-[3px] border-b border-r border-black bg-[#d4d6dc] pl-[2px] pr-[5px]">
          <Rack className="size-4" />
          ABPLC1 *
        </button>
      </div>
    </section>
  );
}

/* ---------- io device mapping ---------- */

const mapColumns: [string, string, boolean][] = [
  ["", "w-[25px]", false],
  ["Device", "w-[80px]", true],
  ["ScanGroup", "w-[80px]", true],
  ["Object", "w-[80px]", true],
  ["Attribute", "w-[80px]", true],
  ["I/O", "w-[45px]", true],
  ["Device.ScanGroup Override", "w-[160px]", false],
  ["Object.Attribute Override", "w-[160px]", false],
  ["Resulting Reference", "w-[200px]", false],
  ["Runtime Value", "w-[80px]", true],
  ["", "", false],
];

function RoundButton({ label, disabled, className, children }: any) {
  return (
    <button
      type="button"
      aria-label={label}
      disabled={disabled}
      className={clsx("size-8", disabled ? "text-[#a0a0a0]" : "text-black", className)}
    >
      <svg viewBox="0 0 32 32" className="size-8" fill="none" stroke="currentColor" strokeWidth="2" aria-hidden="true">
        <circle cx="16" cy="16" r="15" />
        {children}
      </svg>
    </button>
  );
}

function Mapping() {
  return (
    <section className="flex min-h-0 flex-1 flex-col border-x border-b border-[#808080] bg-white">
      <PanelHeader title="IO Device Mapping" icon={IoMapping} />
      <div className="mt-px flex h-10 items-center border-b border-[#808080] bg-[#dedede] pl-[69px]">
        <RoundButton label="Refresh">
          <path d="M9 14q0-6 7-6 7 0 8 5M23 18q0 6-7 6-7 0-8-5" strokeWidth="1.500" />
          <path d="M6 11l3 5 14-1M6 16l3 0M26 21l-3-5" strokeWidth="1.500" />
        </RoundButton>
        <RoundButton label="Import" disabled className="ml-[207px]">
          <path d="M13 7h6v6h4l-7 7-7-7h4z" fill="currentColor" stroke="none" />
          <path d="M8 18v5h16v-5" strokeWidth="3" />
        </RoundButton>
        <RoundButton label="Reset" disabled className="ml-[73px]">
          <path d="M9 18a8 8 0 1 1 6 6" />
          <path d="M4 14l4 5 5-3" />
        </RoundButton>
        <RoundButton label="Undo last" disabled className="ml-[73px]">
          <path d="M8 17a8 8 0 1 1 14 5" />
          <path d="M4 14l4 5 4-4M14 16l2-2v9M14 23h4" strokeWidth="1.500" />
        </RoundButton>
        <RoundButton label="List" className="ml-[208px]">
          <path d="M8 11h3M14 11h10M8 16h3M14 16h10M8 21h3M14 21h10" strokeWidth="3.500" />
        </RoundButton>
        <RoundButton label="Validate" className="ml-[140px]">
          <path d="M7 15l6 6L25 10" strokeWidth="4.500" />
        </RoundButton>
      </div>
      <p className="mb-px mt-px flex h-[29px] items-center border-b border-[#f4f4f4] bg-gradient-to-b from-[#bcbcbc] to-[#dedede] pl-[9px] pt-px font-['Roboto',sans-serif] text-[10px]">
        Drag a column header and drop it here to group by that column
      </p>
      <table className="w-full table-fixed border-separate border-spacing-0 text-white">
        <thead>
          <tr>
            {mapColumns.map(([name, w, filter], i) => (
              <th
                key={i}
                className={clsx(
                  w,
                  "h-[27px] border-r-2 border-[#606060] bg-[linear-gradient(#787878,#4c4c4c_40%,#101010_42%,#1c1c1c_60%,#606060)] p-0 pl-[5px] text-left text-[11px] font-normal leading-[13px]"
                )}
              >
                <div className="flex items-center justify-between whitespace-nowrap">
                  <span>
                    {name === "Runtime Value" ? (
                      <>Runtime<br />Value</>
                    ) : (
                      name
                    )}
                  </span>
                  {filter && (
                    <svg viewBox="0 0 12 14" className="mr-px h-[14px] w-3" aria-hidden="true">
                      <path d="M1 2h9v1L7 6v6L5 10V6L1 3z" fill="#e0e0e0" />
                      <path d="M10 2L7 6v6" stroke="#000" fill="none" />
                    </svg>
                  )}
                </div>
              </th>
            ))}
          </tr>
        </thead>
      </table>
    </section>
  );
}

/* ---------- taskbar ---------- */

const tasks: { label: string; icon: any; active?: boolean }[] = [
  { label: "Новая папка", icon: BigFolder },
  { label: "Новая вкладка - Go...", icon: Chrome },
  { label: "ArchestrA IDE", icon: XLogo, active: true },
  { label: "InTouch - WindowMa...", icon: WindowMaker },
  { label: "InTouch - WindowVie...", icon: WindowViewer },
  { label: "ПМ - Аварии 05.jpg -...", icon: Palette },
];

function Taskbar() {
  return (
    <footer className="flex h-[43px] shrink-0 items-center border-t border-white bg-[#d4d0c8] pl-[2px] pr-[3px]">
      <button type="button" className={clsx(raised, "flex h-[38px] w-[51px] items-center pl-px font-bold")}>
        <Svg className="size-4">
          <path d="M1 4q3-2 6-1L6 7Q3 6 0 8z" fill="#e85828" />
          <path d="M8 3q3 2 7 0l-1 5q-4 1-7 0z" fill="#78b828" />
          <path d="M0 9q3-2 6-1l-1 5q-3-1-5 1z" fill="#3880d8" />
          <path d="M7 9q3 1 7 0l-1 5q-4 2-7 0z" fill="#f8c020" />
        </Svg>
        Пуск
      </button>
      <span className="mx-[7px] h-[34px] w-[3px] border-l border-r border-[#808080] border-r-white" />
      <div className="flex gap-[2px]">
        {tasks.map((t) => (
          <button
            key={t.label}
            type="button"
            className={clsx(
              "flex h-[38px] w-40 items-center whitespace-nowrap text-left",
              t.active
                ? "border-2 border-b-[#d4d0c8] border-l-[#404040] border-r-[#d4d0c8] border-t-[#404040] bg-white pl-[3px] font-bold"
                : clsx(raised, "pl-[5px]")
            )}
          >
            <t.icon />
            <span className="ml-[2px]">{t.label}</span>
          </button>
        ))}
      </div>
      <div className="ml-auto flex items-center">
        <span className="h-[34px] w-[3px] border-l border-r border-[#808080] border-r-white" />
        <span className="mx-2 pb-1">EN</span>
        <span className="h-[22px] w-[3px] border-l border-r border-white border-r-[#808080]" />
        <div className="flex h-[38px] items-center border border-b-white border-l-[#808080] border-r-white border-t-[#808080] pl-[6px]">
          <Svg className="mr-2 size-4">
            <path d="M1.500 1v14" stroke="#606060" />
            <path d="M2 2h6v2h7l-2 3 2 3H8V9H2z" fill="#fff" stroke="#606060" />
          </Svg>
          <Svg className="mr-2 size-4">
            <path d="M1 8l5-3 9 3v7H1z" fill="#f09010" stroke="#a05000" strokeWidth=".8" />
            <path d="M7 7V1l8 1-2 3-4-2v4z" fill="#d87800" />
            <path d="M7.500 8v2M7.500 11v3" stroke="#fff" strokeWidth="1.500" />
          </Svg>
          <Svg className="mr-2 size-4">
            <path d="M1 6h2l4-4v12l-4-4H1z" fill="#fff" stroke="#606060" />
            <path d="M9 5q2 3 0 6M11 3q4 5 0 10M13 2q4 6 0 12" stroke="#808080" fill="none" />
          </Svg>
          <Svg className="mr-[14px] size-4">
            <path d="M5 4h10v8H5z" fill="#b8b8c0" stroke="#505050" />
            <path d="M7 14h7" stroke="#505050" strokeWidth="2" />
            <path d="M1 2h4v4H1zM3 6v9" fill="#fff" stroke="#505050" />
          </Svg>
          <div className="w-[60px] text-center leading-4">
            <div>17:45</div>
            <div className="whitespace-nowrap">29.04.2019</div>
          </div>
          <Svg className="ml-[6px] size-4">
            <path d="M0 3h16v11H0z" fill="#1858b8" />
            <path d="M1 4h14L1 12z" fill="#4898e8" />
            <path d="M0 13h16" stroke="#103060" strokeWidth="2" />
          </Svg>
        </div>
      </div>
    </footer>
  );
}

export default function App() {
  return (
    <div className="flex h-screen flex-col overflow-hidden bg-[#d4d0c8] font-['DejaVu_Sans_Condensed','Noto_Sans',sans-serif] text-[11px] leading-[14px] text-black">
      <Defs />
      <TopBars />

      <main className="flex min-h-0 flex-1 bg-white">
        <div className="flex w-[373px] shrink-0 flex-col">
          <section className="flex min-h-0 flex-1 flex-col">
            <PanelHeader title="Template Toolbox" icon={ToolboxIcon} />
            <ScrollArea>
              <Tree label="Template Toolbox" rows={templateRows} />
            </ScrollArea>
            <DockTabs
              wide
              tabs={[
                { label: <><u>T</u>emplate Toolbox</>, icon: ToolboxIcon, active: true },
                { label: <>Gra<u>p</u>hic Toolbox</>, icon: GraphicIcon },
              ]}
            />
          </section>
          <div className="h-[5px] shrink-0 border-y border-[#0a246a] bg-white" />
          <section className="flex min-h-0 flex-1 flex-col">
            <PanelHeader title="Deployment" icon={DeployIcon} />
            <ScrollArea>
              <Tree label="Deployment" rows={deployRows} />
            </ScrollArea>
            <DockTabs
              tabs={[
                { label: <><u>M</u>odel</>, icon: Model },
                { label: <><u>D</u>eployment</>, icon: DeployIcon, active: true },
                { label: <>De<u>r</u>ivation</>, icon: Derivation },
              ]}
            />
          </section>
        </div>

        <div className="w-[5px] shrink-0 border-x border-[#0a246a]" />

        <div className="flex min-w-0 flex-1 flex-col">
          <Editor />
          <div className="h-[5px] shrink-0 border-y border-[#0a246a] bg-white" />
          <Mapping />
          <div className="h-[2px] bg-[#d4d0c8]" />
        </div>

        <div className="w-[5px] shrink-0 border-x border-[#0a246a]" />

        <section className="flex w-[332px] shrink-0 flex-col">
          <PanelHeader title="IO Devices" icon={IoDevices} />
          <ScrollArea>
            <Tree label="IO Devices" rows={deviceRows} />
          </ScrollArea>
        </section>
      </main>

      <div className="flex h-[21px] shrink-0 items-center border border-[#a0a0a0] bg-gradient-to-b from-[#f0efed] to-[#dcdad5] pl-[3px] pr-[17px]">
        <span className="flex-1">Ready</span>
        <span className="w-[202px]">DefaultUser</span>
        <span className="w-[152px] whitespace-pre">winder_8501  on  USER-PEP...</span>
        <Svg className="size-[14px]">
          <path d="M1 1h14v14H1z" fill="#d8f0fc" stroke="#4090c8" />
          <path d="M3 4h4v4H3z" fill="#fff" stroke="#4090c8" />
          <path d="M8 9l2 4 4-9" stroke="#108030" strokeWidth="2" fill="none" />
        </Svg>
      </div>
      <Taskbar />
    </div>
  );
}
